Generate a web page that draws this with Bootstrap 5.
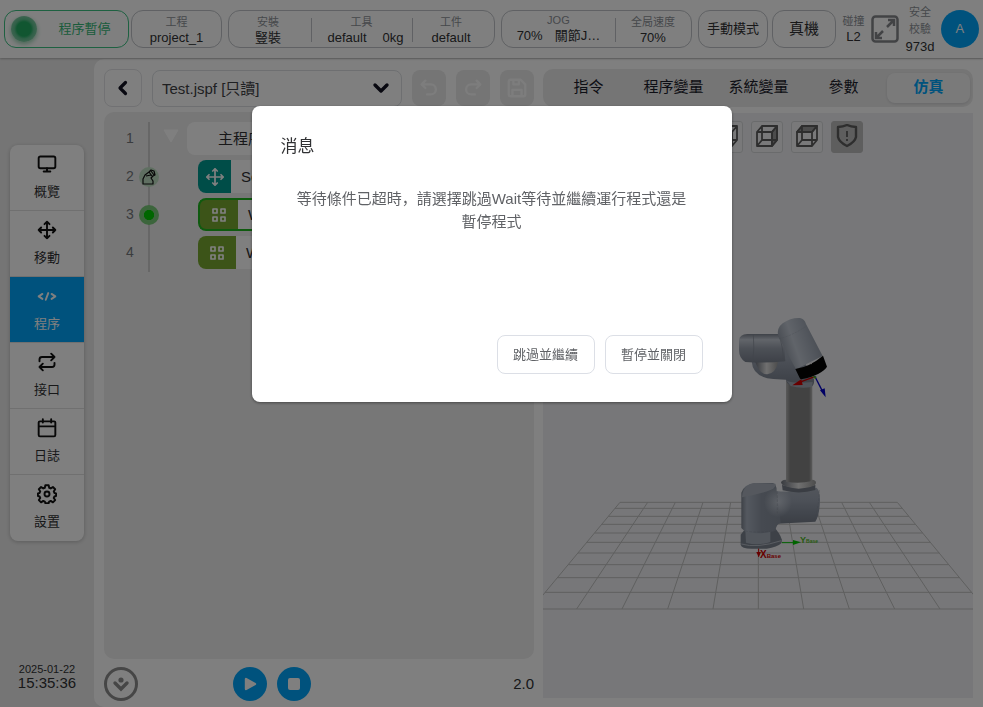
<!DOCTYPE html>
<html lang="zh-Hans">
<head>
<meta charset="utf-8">
<meta name="viewport" content="width=device-width, initial-scale=1">
<title>Test.jspf</title>
<link href="https://cdn.jsdelivr.net/npm/bootstrap@5.3.0/dist/css/bootstrap.min.css" rel="stylesheet">
<style>
:root{--blue:#00a5fa;--ink:#303133;--line:#d4d6da;--soft:#ebebeb}
body{font-family:"Liberation Sans","Noto Sans CJK SC",sans-serif;font-size:13px;line-height:16px;color:var(--ink);background:var(--soft)}
button,select{font:inherit;color:inherit}
.app{height:100vh;min-height:600px}
.topbar{height:58px;padding:0 4px;gap:6px;background:#fff;box-shadow:0 1px 2px rgba(0,0,0,.25);z-index:1}
.pill{height:38px;border:1px solid #c0c3c8;border-radius:12px;background:#fff;padding:0}
.status{flex:1 1 125px;border-color:#3cc283;color:#36b877;padding-left:6px}
.lamp{width:26px;height:26px;border-radius:50%;background:radial-gradient(circle closest-side,#22ad63 55%,#5fc08e 75%,#7dcaa2 100%);box-shadow:0 2px 5px #8fcfac}
.f-project{flex:1 1 91px;padding-top:2px}.f-lead{flex:1 1 218px;gap:2px}.f-setup{flex:1 1 267px}.f-jog{flex:1 1 191px}.f-end{flex:1 1 281px}
.f-mode{flex:0 1 73px}.f-real{flex:0 1 67px;font-size:15px}
.lbl{font-size:11px;color:#8d9197}
.cell{height:38px}
.cell + .cell::before{content:"";position:absolute;left:0;top:7px;height:24px;border-left:1px solid #c0c3c8}
.w-a{flex:81 1 0}.w-b{flex:105 1 0}.w-c{flex:114 1 0}.w-d{flex:77 1 0}
.avatar{width:38px;height:38px;border-radius:50%;background:var(--blue);color:#fff}
.side{width:94px;padding:87px 10px 16px}
.menu{width:74px;border-radius:8px;background:#fff;box-shadow:0 1px 4px rgba(0,0,0,.22);overflow:hidden}
.menu a{height:66px;padding-top:9px;gap:10px;color:var(--ink);text-decoration:none;border-bottom:1px solid #e0e0e0}
.menu a:last-child{border:0}
.menu a.on{background:var(--blue);color:#fff}
.menu svg{width:20px;height:20px;fill:none;stroke:currentColor;stroke-width:2.3;stroke-linecap:round;stroke-linejoin:round}
.menu a:not(.on) svg{color:#111}
.clock{font-size:15px}
.clock small{font-size:11px;line-height:12px}
.stage{background:#fff;border-radius:10px 0 0 10px;padding:10px 10px 0;gap:9px;margin-top:1px}
.half{flex:1 1 0;min-width:0}
.tools{gap:10px;height:38px}
.backbtn{width:38px;height:38px;border:1px solid #e2e3e6;border-radius:8px;background:#fff}
.filebox{height:37px;font-size:15px;color:#3f4145;border:1px solid #dcdfe3;border-radius:8px;background-color:#fff;padding:3px 40px 0 9px;background-size:18px 18px;background-position:right 11px center;background-image:url("data:image/svg+xml,%3Csvg xmlns='http://www.w3.org/2000/svg' viewBox='0 0 18 18'%3E%3Cpath d='M3 6l6 6 6-6' fill='none' stroke='%23101020' stroke-width='3.4' stroke-linecap='round' stroke-linejoin='round'/%3E%3C/svg%3E")}
.gbtn{width:34px;height:36px;border:0;border-radius:8px;background:#eaeaea;flex:none}
.gbtn svg{width:22px;height:22px;fill:none;stroke:#fafafa;stroke-width:2.6;stroke-linecap:round;stroke-linejoin:round}
.code{margin-top:5px;background:#eeeeee;border-radius:10px;padding:10px 0 0 22px;position:relative;overflow:hidden}
.code ol{list-style:none;margin:0;padding:0;position:relative}
.code ol::before{content:"";position:absolute;left:22px;top:0;height:150px;border-left:2px solid #cfcfcf}
.line{height:38px;position:relative;font-size:15px}
.num{width:9px;height:33px;line-height:33px;color:#75787c;font-size:14px}
.dot{position:absolute;left:13px;top:7px;width:20px;height:20px;border-radius:50%;background:#bfdfc2}
.dot svg{display:block}
.dot.now{background:radial-gradient(circle closest-side,#00cc00 48%,#79cb79 54%)}
.block{height:33px;border-radius:8px;background:#fff;overflow:hidden;width:300px}
.block.l1{margin-left:52px;padding-left:31px}
.block.l2{margin-left:63px}
.block.cur{outline:2px solid #1fb41f;outline-offset:-2px;padding:2px}
.tag{width:38px;height:100%;background:#78a830;margin-right:10px}
.tag.move{width:33px;background:#009a91}
.tag svg{width:18px;height:18px;fill:none;stroke:#fff;stroke-width:1.7;stroke-linecap:round;stroke-linejoin:round}
.fold{position:absolute;left:37px;top:7px}
.bar{height:48px;padding-top:2px}
.rbtn{width:34px;height:34px;border:0;border-radius:50%;background:var(--blue)}
.rbtn.ghost{background:none;border:3px solid #8d8d8d}
.runs{gap:10px;margin-left:95px}
.big{font-size:15px}
.tabs{height:38px;background:#ebebeb;border-radius:10px;padding:4px 3px 4px 4px;gap:2px}
.tabs button{flex:1 1 0;border:0;background:none;border-radius:8px;font-size:15px;padding:0 0 3px;white-space:nowrap;color:#1b1c2a}
.tabs button.on{background:#f5f5f5;color:var(--blue);font-weight:700;box-shadow:0 1px 3px rgba(0,0,30,.12)}
.scene{margin:6px 0 9px;background:#eeeff2;position:relative;overflow:hidden}
.scene > svg{position:absolute;inset:0;width:100%;height:100%}
.views{position:absolute;left:8px;top:8px;gap:8px}
.views button{width:32px;height:32px;padding:0;border:1px solid #d5d6d9;border-radius:3px;background:#f2f3f5}
.views button.on{background:#bdbdbd;border-color:#bdbdbd}
.views svg{display:block;margin:2px auto 4px;width:24px;height:24px;fill:none;stroke:#5c5c5c;stroke-width:1.8;stroke-linejoin:round}
.modal{background:rgba(0,0,0,.5)}
.modal-dialog{width:480px;max-width:100%;margin:15vh auto 0}
.modal-content{border:0;border-radius:8px;min-height:296px;padding:29px 29px 28px;box-shadow:0 1px 3px rgba(0,0,0,.4)}
.modal-title{font-size:17px;line-height:24px;font-weight:400}
.msg{font-size:15px;line-height:23px;color:#606266;margin:28px 11px 0;text-align:center}
.mbtn{height:39px;min-width:98px;border:1px solid #dcdfe6;border-radius:8px;background:#fff;color:#606266;padding:0 14px}
.acts{gap:10px}
</style>
<script src="https://cdn.jsdelivr.net/npm/bootstrap@5.3.0/dist/js/bootstrap.bundle.min.js"></script>
</head>
<body>
<div class="app d-flex flex-column">
  <header class="topbar d-flex align-items-center position-relative flex-shrink-0">
    <div class="f-lead d-flex">
      <div class="pill status d-flex align-items-center"><span class="lamp flex-shrink-0"></span><span class="flex-grow-1 text-center ps-1">程序暫停</span></div>
      <button class="pill f-project"><span class="lbl d-block">工程</span>project_1</button>
    </div>
    <div class="pill f-setup d-flex text-center">
      <div class="cell w-a position-relative d-flex flex-column justify-content-center pe-1"><span class="lbl">安裝</span><span>豎裝</span></div>
      <div class="cell w-b position-relative d-flex flex-column justify-content-center"><span class="lbl">工具</span><span class="d-flex justify-content-center gap-3 ps-2"><span>default</span><span>0kg</span></span></div>
      <div class="cell w-a position-relative d-flex flex-column justify-content-center pe-1"><span class="lbl">工件</span><span>default</span></div>
    </div>
    <div class="pill f-jog d-flex text-center">
      <div class="cell w-c position-relative d-flex flex-column justify-content-center pb-1"><span class="lbl">JOG</span><span class="d-flex justify-content-center gap-2"><span class="pe-1">70%</span><span>關節J…</span></span></div>
      <div class="cell w-d position-relative d-flex flex-column justify-content-center"><span class="lbl">全局速度</span><span>70%</span></div>
    </div>
    <div class="f-end d-flex align-items-center justify-content-between">
      <div class="d-flex gap-1"><button class="pill f-mode text-nowrap px-2 mx-0">手動模式</button><button class="pill f-real text-nowrap px-3">真機</button></div>
      <div class="text-center"><span class="lbl d-block">碰撞</span>L2</div>
      <svg class="flex-shrink-0" width="28" height="28" viewBox="0 0 28 28" fill="none" stroke="#85878b" stroke-width="2.500"><rect x="1.500" y="1.500" width="25" height="25" rx="3"/><path d="M16 12l7-7M17 5h6v6M12 16l-7 7M5 17v6h6"/></svg>
      <div class="text-center"><span class="lbl d-block">安全</span><span class="lbl d-block py-1 lh-1">校驗</span>973d</div>
      <button class="avatar border-0 flex-shrink-0">A</button>
    </div>
  </header>

  <div class="d-flex flex-grow-1 overflow-hidden">
    <aside class="side d-flex flex-column flex-shrink-0">
      <nav class="menu">
        <a href="#" class="d-flex flex-column align-items-center"><svg viewBox="0 0 24 24"><rect x="2" y="3" width="20" height="14" rx="2"/><path d="M8 21h8M12 17v4"/></svg>概覽</a>
        <a href="#" class="d-flex flex-column align-items-center"><svg viewBox="0 0 24 24"><path d="M12 2v20M2 12h20M9 5l3-3 3 3M9 19l3 3 3-3M5 9l-3 3 3 3M19 9l3 3-3 3"/></svg>移動</a>
        <a href="#" class="on d-flex flex-column align-items-center"><svg viewBox="0 0 24 24"><path d="M6.500 9.500L2 12.500l4.500 3M17.500 9.500l4.500 3-4.500 3M13.500 8.500l-3 8"/></svg>程序</a>
        <a href="#" class="d-flex flex-column align-items-center"><svg viewBox="0 0 24 24"><path d="M17 2l4 4-4 4M3 11V9a3 3 0 0 1 3-3h15M7 22l-4-4 4-4M21 13v2a3 3 0 0 1-3 3H3"/></svg>接口</a>
        <a href="#" class="d-flex flex-column align-items-center"><svg viewBox="0 0 24 24"><rect x="2" y="4" width="20" height="18" rx="1.500"/><path d="M7 1.500v4M17 1.500v4M3 10h18"/></svg>日誌</a>
        <a href="#" class="d-flex flex-column align-items-center"><svg viewBox="0 0 24 24"><circle cx="12" cy="12" r="3"/><path d="M10 1.500h4l.6 3 1.900.8 2.600-1.700 2.700 2.700-1.700 2.600.8 1.900 2 .4v3.200l-2 .6-.8 1.700 1.700 2.600-2.700 2.700-2.600-1.700-1.900.8-.6 2h-4l-.6-2-1.900-.8-2.600 1.700-2.700-2.700 1.700-2.600-.8-1.700-2-.6v-3.200l2-.4.8-1.900-1.700-2.600 2.700-2.700 2.600 1.700 1.900-.8z"/></svg>設置</a>
      </nav>
      <div class="clock text-center mt-auto"><small class="d-block">2025-01-22</small>15:35:36</div>
    </aside>

    <main class="stage d-flex flex-grow-1">
      <section class="half d-flex flex-column">
        <div class="tools d-flex align-items-center">
          <button class="backbtn flex-shrink-0 p-0" aria-label="返回"><svg width="18" height="18" viewBox="0 0 18 18" fill="none" stroke="#101020" stroke-width="3.2" stroke-linecap="round" stroke-linejoin="round"><path d="M11.500 3.500L6 9l5.500 5.500"/></svg></button>
          <select class="form-select filebox" aria-label="程序文件"><option>Test.jspf [只讀]</option></select>
          <button class="gbtn p-0" aria-label="撤銷"><svg viewBox="0 0 24 24"><path d="M8 4L4 8l4 4M5 8h9a5.500 5.500 0 0 1 0 11h-4"/></svg></button>
          <button class="gbtn p-0" aria-label="重做"><svg viewBox="0 0 24 24"><path d="M16 4l4 4-4 4M19 8h-9a5.500 5.500 0 0 0 0 11h4"/></svg></button>
          <button class="gbtn p-0" aria-label="保存"><svg viewBox="0 0 24 24"><path d="M3 5a2 2 0 0 1 2-2h11l5 5v11a2 2 0 0 1-2 2H5a2 2 0 0 1-2-2zM8 3v5h6V3M7 21v-7h10v7"/></svg></button>
        </div>
        <div class="code flex-grow-1">
          <ol>
            <li class="line d-flex"><span class="num">1</span><svg class="fold" width="16" height="14" viewBox="0 0 16 14"><path d="M1 1h14L8 13z" fill="#fff" stroke="#fff" stroke-linejoin="round"/></svg><div class="block l1 d-flex align-items-center">主程序</div></li>
            <li class="line d-flex"><span class="num">2</span><span class="dot"><svg width="20" height="20" viewBox="0 0 20 20" fill="none" stroke="#111" stroke-width="1.200" stroke-linejoin="round"><path d="M4 17h10v-3l-2-3 2-2 2-1-1-4-3-1-2 2-4 3-2 4zM10 5l3 4M7 9l5-1M12 4l3 4"/></svg></span><div class="block l2 d-flex align-items-center"><span class="tag move d-flex align-items-center justify-content-center"><svg viewBox="0 0 24 24"><path stroke-width="2.300" d="M12 1v22M1 12h22M9 4l3-3 3 3M9 20l3 3 3-3M4 9l-3 3 3 3M20 9l3 3-3 3"/></svg></span>Set</div></li>
            <li class="line d-flex"><span class="num">3</span><span class="dot now"></span><div class="block l2 cur d-flex align-items-center"><span class="tag d-flex align-items-center justify-content-center"><svg viewBox="0 0 18 18"><path d="M3 3h4v4H3zM11 3h4v4h-4zM3 11h4v4H3zM11 11h4v4h-4z"/></svg></span>Wait</div></li>
            <li class="line d-flex"><span class="num">4</span><div class="block l2 d-flex align-items-center"><span class="tag d-flex align-items-center justify-content-center"><svg viewBox="0 0 18 18"><path d="M3 3h4v4H3zM11 3h4v4h-4zM3 11h4v4H3zM11 11h4v4h-4z"/></svg></span>Wait</div></li>
          </ol>
        </div>
        <div class="bar d-flex align-items-center">
          <button class="rbtn ghost p-0 d-flex align-items-center justify-content-center" aria-label="展開"><svg width="22" height="22" viewBox="0 0 22 22"><circle cx="11" cy="7" r="2.600" fill="#8d8d8d"/><path d="M5 10l6 6 6-6" fill="none" stroke="#8d8d8d" stroke-width="3.400" stroke-linecap="round"/></svg></button>
          <div class="runs d-flex">
            <button class="rbtn p-0 d-flex align-items-center justify-content-center" aria-label="運行"><svg width="16" height="16" viewBox="0 0 16 16"><path d="M4 3v10l9-5z" fill="#fff" stroke="#fff" stroke-width="2.400" stroke-linejoin="round"/></svg></button>
            <button class="rbtn p-0 d-flex align-items-center justify-content-center" aria-label="停止"><svg width="16" height="16" viewBox="0 0 16 16"><rect x="2" y="2" width="12" height="12" rx="2" fill="#fff"/></svg></button>
          </div>
          <span class="ms-auto big">2.0</span>
        </div>
      </section>

      <section class="half d-flex flex-column">
        <div class="tabs d-flex">
          <button>指令</button><button>程序變量</button><button>系統變量</button><button>參數</button><button class="on">仿真</button>
        </div>
        <div class="scene flex-grow-1">
          <svg viewBox="543 113 430 585" preserveAspectRatio="xMidYMid slice" role="img" aria-label="機器人仿真">
            <defs>
              <linearGradient id="tube"><stop offset="0" stop-color="#b4b4b4"/><stop offset=".16" stop-color="#858585"/><stop offset=".88" stop-color="#858585"/><stop offset="1" stop-color="#b8b8b8"/></linearGradient>
              <linearGradient id="vert"><stop offset="0" stop-color="#7c838e"/><stop offset=".14" stop-color="#a9b2c0"/><stop offset=".5" stop-color="#8d95a3"/><stop offset="1" stop-color="#868e9b"/></linearGradient>
              <linearGradient id="horz" x2="0" y2="1"><stop offset="0" stop-color="#7d8490"/><stop offset=".2" stop-color="#c4cad4"/><stop offset=".5" stop-color="#9aa1ae"/><stop offset="1" stop-color="#7b828f"/></linearGradient>
              <linearGradient id="low" x2="0" y2="1"><stop offset="0" stop-color="#a5acb8"/><stop offset=".35" stop-color="#9aa2b0"/><stop offset=".7" stop-color="#858d9b"/><stop offset="1" stop-color="#767d89"/></linearGradient>
              <linearGradient id="diag" x1="0" y1=".6" x2="1" y2=".2"><stop offset="0" stop-color="#858d9a"/><stop offset=".35" stop-color="#c2c9d4"/><stop offset=".65" stop-color="#a6aebb"/><stop offset="1" stop-color="#848b98"/></linearGradient>
              <linearGradient id="cuff"><stop offset="0" stop-color="#70757f"/><stop offset=".5" stop-color="#e0e0e0"/><stop offset="1" stop-color="#999"/></linearGradient>
              <radialGradient id="shine"><stop offset="0" stop-color="#dfe5ee" stop-opacity=".6"/><stop offset="1" stop-color="#dfe5ee" stop-opacity="0"/></radialGradient>
            </defs>
            <g transform="translate(540 480) scale(.33333)" fill="none" stroke="#bebebe" stroke-width="3">
              <path d="M240 67L-26 387M323 67L110 387M406 67L246 387M489 67L383 387M572 67L519 387M655 67V387M738 67L791 387M822 67L928 387M905 67L1064 387M988 67L1200 387M1072 67L1336 387"/>
              <path d="M240 67H1072M225 85H1087M205 109H1107M185 133H1126M164 159H1148M140 187H1171M114 219H1198M85 254H1226M52 293H1259M15 337H1295M-26 387H1336"/>
            </g>
            <g transform="translate(720 300) scale(.33333)">
              <rect x="198" y="240" width="79" height="310" fill="url(#tube)"/>
              <path d="M62 704L62 734Q64 746 95 746H140Q172 741 184 730L186 720Q180 698 160 680L76 686Z" fill="#7b838f"/>
              <path d="M76 690H151V726Q115 738 78 728Z" fill="#a4adb9"/><path d="M64 732Q110 746 184 722" fill="none" stroke="#b4bac4" stroke-width="3"/>
              <path d="M160 572Q230 580 290 563Q300 572 300 600Q299 645 286 665L170 671Z" fill="url(#low)"/>
              <path d="M64 578Q72 553 105 549H158Q170 552 170 572L182 668Q168 672 167 692Q118 706 76 695L64 684Z" fill="url(#vert)"/>
              <path d="M66 592Q68 554 106 549L166 551Q172 562 142 574Q105 586 66 592Z" fill="#aab1bc"/>
              <ellipse cx="174" cy="606" rx="42" ry="46" fill="url(#shine)"/>
              <path d="M172 574V640M298 570Q297 620 282 664M76 693Q120 701 166 690" fill="none" stroke="#7d8490" stroke-dasharray="8 4"/>
              <path d="M186 555Q235 570 286 555V570Q238 584 188 571Z" fill="#747b86"/>
              <path d="M183 546Q190 538 199 540V545Q238 552 276 543V539Q288 540 288 548Q288 562 236 566Q184 562 183 546Z" fill="url(#cuff)"/>
              <path d="M95 184Q98 232 160 237L198 239Q200 258 236 262L274 261Q284 254 282 238L250 180L180 130Z" fill="url(#low)"/>
              <path d="M198 240Q210 252 278 246L276 261Q240 266 212 258Z" fill="#a0a8b4"/>
              <path d="M106 186Q119 224 142 223Q168 219 174 186Z" fill="url(#cuff)"/>
              <path d="M57 120Q59 103 82 102H190L196 184Q140 190 76 186Q57 174 57 150Z" fill="url(#horz)"/>
              <path d="M100 103Q104 145 98 186M176 104Q190 140 190 184" fill="none" stroke="#828995" stroke-width="2"/>
              <path d="M174 108Q170 84 188 70Q214 52 240 54Q254 57 258 72L308 168L228 208Z" fill="url(#diag)"/>
              <path d="M178 116Q214 108 260 78" fill="none" stroke="#8f97a3" stroke-dasharray="7 3"/>
              <path d="M226 207Q270 200 309 167L321 200Q306 224 244 238Q240 238 238 232Z" fill="#050505"/><circle cx="273" cy="190" r="3" fill="#ddd"/>
              <path d="M284 230L236 248" stroke="#c80000" stroke-width="4"/><path d="M244 238L217 256L248 255Z" fill="#d00000"/>
              <path d="M284 228L308 275" stroke="#0000c8" stroke-width="4"/><path d="M300 271L314 265L317 292Z" fill="#0000c8"/><path d="M276 228L290 230L286 238Z" fill="#4cae18"/>
              <path d="M186 728H222" stroke="#00c800" stroke-width="3"/><path d="M219 720L243 727L219 735Z" fill="#00c800"/>
              <path d="M116 746V770" stroke="#c80000" stroke-width="3"/><path d="M109 756H123L116 772Z" fill="#d00000"/>
            </g>
            <g font-family="Liberation Sans, sans-serif" font-weight="700">
              <text x="760" y="558" font-size="10" fill="#d00000">X<tspan font-size="6">Base</tspan></text>
              <text x="800" y="543" font-size="9" fill="#4fb526">Y<tspan font-size="5">Base</tspan></text>
            </g>
          </svg>
          <div class="views d-flex">
            <button aria-label="視角1"><svg viewBox="0 0 24 24"><path d="M2 7h15v15H2zM7 2h15v15H7z"/></svg></button>
            <button aria-label="視角2"><svg viewBox="0 0 24 24"><path d="M2 7h15v15H2zM7 2h15v15H7z"/></svg></button>
            <button aria-label="視角3"><svg viewBox="0 0 24 24"><path d="M2 7h15v15H2zM7 2h15v15H7z"/></svg></button>
            <button aria-label="視角4"><svg viewBox="0 0 24 24"><path d="M2 7h15v15H2zM7 2h15v15H7z"/></svg></button>
            <button aria-label="視角5"><svg viewBox="0 0 24 24"><path d="M2 8h15v14H2zM7 2h15v14H7zM2 8l5-6M17 8l5-6M2 22l5-6M17 22l5-6"/></svg></button>
            <button aria-label="視角6"><svg viewBox="0 0 24 24"><path d="M17 8l5-6v14l-5 6z" fill="#999"/><path d="M2 8h15v14H2zM7 2h15v14H7zM2 8l5-6M17 8l5-6M2 22l5-6M17 22l5-6"/></svg></button>
            <button aria-label="視角7"><svg viewBox="0 0 24 24"><path d="M2 8l5-6h15l-5 6z" fill="#999"/><path d="M2 8h15v14H2zM7 2h15v14H7zM2 8l5-6M17 8l5-6M2 22l5-6M17 22l5-6"/></svg></button>
            <button class="on" aria-label="安全區域"><svg viewBox="0 0 24 24"><path stroke-width="2.400" d="M3 3q5 0 9-2 4 2 9 2v10q-1 5-9 9-8-4-9-9z"/><path d="M12 7v6M12 15v2"/></svg></button>
          </div>
        </div>
      </section>
    </main>
  </div>
</div>

<div class="modal d-block" role="dialog" aria-modal="true" aria-labelledby="dlgTitle">
  <div class="modal-dialog">
    <div class="modal-content">
      <h2 class="modal-title" id="dlgTitle">消息</h2>
      <p class="msg">等待條件已超時，請選擇跳過Wait等待並繼續運行程式還是暫停程式</p>
      <div class="acts d-flex justify-content-end mt-auto">
        <button class="mbtn">跳過並繼續</button>
        <button class="mbtn">暫停並關閉</button>
      </div>
    </div>
  </div>
</div>
</body>
</html>
